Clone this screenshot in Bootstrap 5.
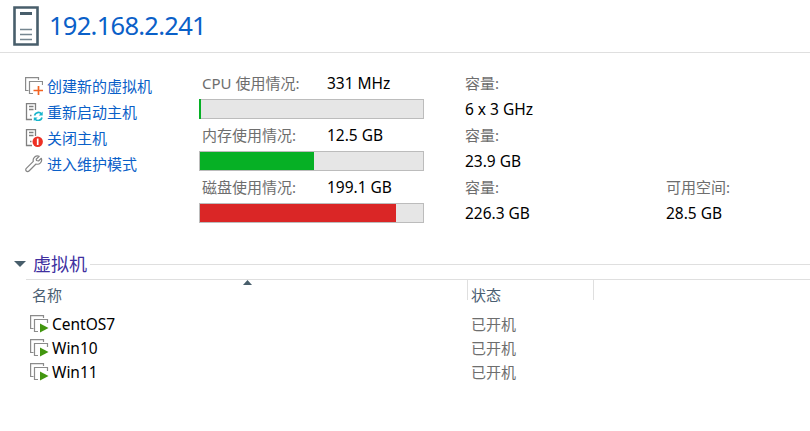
<!DOCTYPE html>
<html lang="zh-CN">
<head>
<meta charset="utf-8">
<meta name="viewport" content="width=device-width, initial-scale=1">
<title>192.168.2.241</title>
<link href="https://cdn.jsdelivr.net/npm/bootstrap@5.3.0/dist/css/bootstrap.min.css" rel="stylesheet">
<style>
body{font-family:"Noto Sans","Noto Sans CJK SC",sans-serif;font-size:15px;line-height:26px;color:#000;background:#fff;overflow:hidden;white-space:nowrap}
svg{display:block;flex:none}
.host-head{height:53px;padding-left:13px;border-bottom:1px solid #dfdfdf!important}
.host-name{font-size:25.5px;line-height:34px;letter-spacing:-.73px;color:#0a60c8;margin:-2px 0 0 10px}
.actions{width:199px;padding:20px 0 0 25px}
.actions a{color:#0a60c8;height:26px;gap:4px}
.lbl{color:#6e6e6e}
.val{font-size:15.5px;letter-spacing:-.02px}
.usage{width:225px}
.usage-text{height:29px;padding:0 0 0 3px}
.usage-text .lbl{width:125px}
.usage-item{height:52px}
.meter{height:20px;border:1px solid #bcbcbc;border-radius:0;background:#e6e6e6}
.bg-ok{background:#06b025}
.bg-full{background:#da2626}
.meter .sliver{width:2px;margin-left:-1px;height:20px;margin-top:-1px}
.meter.progress{overflow:visible}
.capacity{width:201px;margin-left:41px}
.stats{padding-top:17px}
.vm-section{margin-top:25px}
.caret{margin-left:14px}
.vm-title{font-size:18px;line-height:26px;color:#40309f;margin:0 3px 0 7px}
.vm-rule{height:1px;background:#dfdfdf}
.vm-list{margin:2px 0 0 26px;border-top:1px solid #dfdfdf}
.vm-headrow{height:20px;color:#4a5e72;line-height:31px}
.c-name{width:441px;padding-left:6px}
.c-state{width:127px;padding-left:3px;border-left:1px solid #dfdfdf;border-right:1px solid #dfdfdf}
.sort{left:217px;top:0}
.vm-body{padding-top:12px}
.vm-row{height:24px;line-height:24px}
.vm-row .n{width:445px;padding-left:4px;gap:3px}
</style>
<script src="https://cdn.jsdelivr.net/npm/bootstrap@5.3.0/dist/js/bootstrap.bundle.min.js"></script>
</head>
<body>
<svg width="0" height="0" class="position-absolute">
  <symbol id="frames" viewBox="0 0 19 18"><path d="M3.500 13.500H.6V.6H13.500V3" fill="none" stroke="#8b8b8b" stroke-width="1.200"/><path d="M8 16.500H4.500V4.500H17.500V8" fill="none" stroke="#8b8b8b" stroke-width="1.200"/></symbol>
  <symbol id="tower" viewBox="0 0 19 18"><path d="M7 16.500H1.500V.6H10.500V7M4 3.500H8.500M4 6.500H8.500M5 12.500H6.500" fill="none" stroke="#808080" stroke-width="1.300"/></symbol>
  <symbol id="vm" viewBox="0 0 19 18"><use href="#frames" width="19" height="18"/><path d="M10 8.500V17.500L18.500 13Z" fill="#42960f"/></symbol>
</svg>
<header class="host-head d-flex align-items-center">
  <svg width="26" height="40" viewBox="0 0 26 40"><path d="M1.500 1.500H24.500V38.500H1.500Z" fill="#fff" stroke="#485e6b" stroke-width="2.600"/><path d="M7 7.500H19" stroke="#485e6b" stroke-width="3"/><path d="M7 23.500H19M7 28.500H19M7 33.500H19" stroke="#758690" stroke-width="1.600"/></svg>
  <h1 class="host-name fw-normal">192.168.2.241</h1>
</header>
<main>
  <section class="d-flex">
    <nav class="actions">
      <a href="#" class="d-flex align-items-center text-decoration-none"><svg width="18" height="18" viewBox="0 0 18 18"><use href="#frames" width="19" height="18"/><path d="M8 13.500H18M13.500 8V18" stroke="#fff" stroke-width="3.500"/><path d="M8.500 13.500H18M13.500 9V18" stroke="#f26322" stroke-width="1.700"/></svg>创建新的虚拟机</a>
      <a href="#" class="d-flex align-items-center text-decoration-none"><svg width="18" height="18" viewBox="0 0 18 18"><use href="#tower" width="19" height="18"/><path d="M9.500 12.500A4 4 0 0 1 16.500 11M17 14.500A4 4 0 0 1 10 16" fill="none" stroke="#18b5cc" stroke-width="1.700"/><path d="M17.700 8.500V12.500H13.700ZM8.800 18V14.500H12.700Z" fill="#18b5cc"/></svg>重新启动主机</a>
      <a href="#" class="d-flex align-items-center text-decoration-none"><svg width="18" height="18" viewBox="0 0 18 18"><use href="#tower" width="19" height="18"/><circle cx="12.700" cy="12.700" r="5.200" fill="#ed3024"/><path d="M12.700 9.500V16" stroke="#fff" stroke-width="1.700"/></svg>关闭主机</a>
      <a href="#" class="d-flex align-items-center text-decoration-none"><svg width="18" height="18" viewBox="0 0 18 18"><path d="M14.200 1.300A4.300 4.300 0 0 0 8.300 6.300L1.300 13.300A1.900 1.900 0 0 0 4 16L11 9A4.300 4.300 0 0 0 16.300 3.300L13.500 6L11.500 5.500L11.200 4.200Z" fill="none" stroke="#858585" stroke-width="1.200" stroke-linejoin="round"/></svg>进入维护模式</a>
    </nav>
    <div class="stats d-flex">
      <div class="usage">
        <div class="usage-item"><div class="usage-text d-flex"><span class="lbl">CPU 使用情况:</span><span class="val">331 MHz</span></div><div class="progress meter"><div class="sliver bg-ok"></div></div></div>
        <div class="usage-item"><div class="usage-text d-flex"><span class="lbl">内存使用情况:</span><span class="val">12.5 GB</span></div><div class="progress meter"><div class="bg-ok" style="width:51.1%"></div></div></div>
        <div class="usage-item"><div class="usage-text d-flex"><span class="lbl">磁盘使用情况:</span><span class="val">199.1 GB</span></div><div class="progress meter"><div class="bg-full" style="width:87.9%"></div></div></div>
      </div>
      <div class="capacity">
        <div class="lbl">容量:</div><div class="val">6 x 3 GHz</div>
        <div class="lbl">容量:</div><div class="val">23.9 GB</div>
        <div class="lbl">容量:</div><div class="val">226.3 GB</div>
      </div>
      <div class="align-self-end"><div class="lbl">可用空间:</div><div class="val">28.5 GB</div></div>
    </div>
  </section>
  <section class="vm-section">
    <div class="d-flex align-items-center"><svg class="caret" width="12" height="6" viewBox="0 0 12 6"><path d="M0 0H12L6 6Z" fill="#485e6b"/></svg><h2 class="vm-title fw-normal">虚拟机</h2><div class="vm-rule flex-grow-1"></div></div>
    <div class="vm-list position-relative">
      <svg class="sort position-absolute" width="9" height="5" viewBox="0 0 9 5"><path d="M0 5L4.500 0L9 5Z" fill="#485e6b"/></svg>
      <div class="vm-headrow d-flex"><div class="c-name">名称</div><div class="c-state">状态</div></div>
      <div class="vm-body">
        <div class="vm-row d-flex"><div class="n d-flex align-items-center"><svg width="19" height="18"><use href="#vm"/></svg><span class="val">CentOS7</span></div><div class="lbl">已开机</div></div>
        <div class="vm-row d-flex"><div class="n d-flex align-items-center"><svg width="19" height="18"><use href="#vm"/></svg><span class="val">Win10</span></div><div class="lbl">已开机</div></div>
        <div class="vm-row d-flex"><div class="n d-flex align-items-center"><svg width="19" height="18"><use href="#vm"/></svg><span class="val">Win11</span></div><div class="lbl">已开机</div></div>
      </div>
    </div>
  </section>
</main>
</body>
</html>
